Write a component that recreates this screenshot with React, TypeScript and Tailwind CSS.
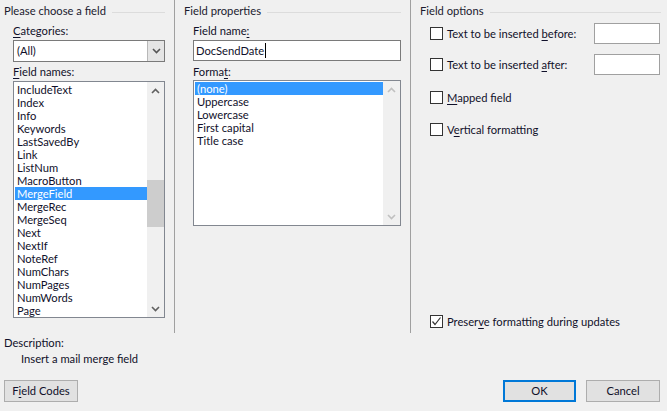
import React from "react";

const font = { fontFamily: 'Lato, "Segoe UI", sans-serif' };

function U({ children }: { children: React.ReactNode }) {
  return <span className="underline underline-offset-2">{children}</span>;
}

function Heading({ children }: { children: React.ReactNode }) {
  return (
    <div className="flex items-center h-[14px] mt-[4px] gap-[6px]">
      <span className="whitespace-nowrap text-[#1b1b2f]">{children}</span>
      <div className="flex-1 h-px bg-[#dcdcdc] mt-[2px]" />
    </div>
  );
}

function Chevron({ up, color }: { up?: boolean; color: string }) {
  return (
    <svg width="9" height="6" viewBox="0 0 9 6">
      <path
        d={up ? "M1 5 L4.5 1.5 L8 5" : "M1 1 L4.5 4.5 L8 1"}
        stroke={color}
        strokeWidth="1.6"
        fill="none"
      />
    </svg>
  );
}

function Check({ checked, label }: { checked?: boolean; label: React.ReactNode }) {
  return (
    <div className="flex items-center gap-[4px]">
      <div className="w-[13px] h-[13px] border border-[#333] bg-white flex items-center justify-center">
        {checked && (
          <svg width="11" height="11" viewBox="0 0 11 11">
            <path d="M1.5 5.5 L4 8.5 L9.5 1.5" stroke="#333" strokeWidth="1.2" fill="none" />
          </svg>
        )}
      </div>
      <span className="whitespace-nowrap">{label}</span>
    </div>
  );
}

const fieldNames = [
  "IncludeText",
  "Index",
  "Info",
  "Keywords",
  "LastSavedBy",
  "Link",
  "ListNum",
  "MacroButton",
  "MergeField",
  "MergeRec",
  "MergeSeq",
  "Next",
  "NextIf",
  "NoteRef",
  "NumChars",
  "NumPages",
  "NumWords",
  "Page",
];

const formats = ["(none)", "Uppercase", "Lowercase", "First capital", "Title case"];

export default function App() {
  return (
    <div
      className="w-[667px] h-[411px] bg-[#f0f0f0] text-[11.2px] leading-[14px] text-[#10102a] overflow-hidden flex flex-col"
      style={font}
    >
      <div className="flex h-[333px]">
        {/* Column 1 */}
        <div className="w-[175px] border-r border-[#a0a0a0] pl-[4px] pr-[9px] flex flex-col">
          <Heading>Please choose a field</Heading>
          <div className="pl-[9px] flex flex-col">
            <div className="mt-[6px] h-[14px]">
              <U>C</U>ategories:
            </div>
            <div className="mt-[2px] h-[22px] border border-[#7a7a7a] bg-white flex">
              <div className="flex-1 pl-[3px] flex items-center">(All)</div>
              <div className="w-[17px] bg-[#e5e5e5] border-l border-[#b8b8b8] flex items-center justify-center">
                <Chevron color="#555" />
              </div>
            </div>
            <div className="mt-[3px] h-[14px]">
              <U>F</U>ield names:
            </div>
            <div className="mt-[2px] h-[237px] border border-[#828790] bg-white flex">
              <div className="flex-1 pt-[1px] pl-[1px] overflow-hidden">
                {fieldNames.map((n) => (
                  <div
                    key={n}
                    className={
                      "h-[13px] leading-[13px] pl-[2px] whitespace-nowrap overflow-hidden " +
                      (n === "MergeField" ? "bg-[#3399ff] text-white" : "")
                    }
                  >
                    {n}
                  </div>
                ))}
              </div>
              <div className="w-[17px] bg-[#f0f0f0] flex flex-col items-center">
                <div className="h-[17px] flex items-center justify-center">
                  <Chevron up color="#606060" />
                </div>
                <div className="w-full mt-[81px] h-[47px] bg-[#cdcdcd]" />
                <div className="flex-1" />
                <div className="h-[17px] flex items-center justify-center">
                  <Chevron color="#606060" />
                </div>
              </div>
            </div>
          </div>
        </div>

        {/* Column 2 */}
        <div className="w-[236px] border-r border-[#a0a0a0] pl-[9px] pr-[9px] flex flex-col">
          <Heading>Field properties</Heading>
          <div className="pl-[9px] flex flex-col">
            <div className="mt-[6px] h-[14px]">
              Field name<U>:</U>
            </div>
            <div className="mt-[2px] h-[21px] border border-[#7a7a7a] bg-white flex items-center pl-[2px]">
              DocSendDate
              <span className="inline-block w-px h-[15px] bg-black ml-px" />
            </div>
            <div className="mt-[4px] h-[14px]">
              Forma<U>t</U>:
            </div>
            <div className="mt-[1px] h-[146px] border border-[#828790] bg-white flex">
              <div className="flex-1 pt-[1px] pl-[1px]">
                {formats.map((f, i) => (
                  <div
                    key={f}
                    className={
                      "h-[13px] leading-[13px] pl-[2px] whitespace-nowrap overflow-hidden " +
                      (i === 0 ? "bg-[#3399ff] text-white" : "")
                    }
                  >
                    {f}
                  </div>
                ))}
              </div>
              <div className="w-[17px] bg-[#f0f0f0] flex flex-col items-center">
                <div className="h-[17px] flex items-center justify-center">
                  <Chevron up color="#c0c0c0" />
                </div>
                <div className="flex-1" />
                <div className="h-[17px] flex items-center justify-center">
                  <Chevron color="#c0c0c0" />
                </div>
              </div>
            </div>
          </div>
        </div>

        {/* Column 3 */}
        <div className="flex-1 pl-[9px] pr-[6px] flex flex-col">
          <Heading>Field options</Heading>
          <div className="pl-[10px] pr-[1px] flex flex-col">
            <div className="mt-[5px] h-[21px] flex items-center justify-between">
              <Check label={<>Text to be inserted <U>b</U>efore:</>} />
              <div className="w-[66px] h-[21px] bg-white border border-[#a0a0a0]" />
            </div>
            <div className="mt-[10px] h-[21px] flex items-center justify-between">
              <Check label={<>Text to be inserted <U>a</U>fter:</>} />
              <div className="w-[66px] h-[21px] bg-white border border-[#a0a0a0]" />
            </div>
            <div className="mt-[12px] h-[21px] flex items-center">
              <Check label={<><U>M</U>apped field</>} />
            </div>
            <div className="mt-[11px] h-[21px] flex items-center">
              <Check label={<>V<U>e</U>rtical formatting</>} />
            </div>
            <div className="mt-[171px] h-[21px] flex items-center">
              <Check checked label={<>Preser<U>v</U>e formatting during updates</>} />
            </div>
          </div>
        </div>
      </div>

      {/* Bottom */}
      <div className="flex-1 flex flex-col pl-[4px] pr-[7px]">
        <div className="mt-[3px] h-[14px]">Description:</div>
        <div className="mt-[2px] h-[14px] pl-[17px]">Insert a mail merge field</div>
        <div className="mt-[14px] flex items-center justify-between">
          <button className="w-[74px] h-[22px] bg-[#e1e1e1] border border-[#adadad] text-[#10102a]">
            F<U>i</U>eld Codes
          </button>
          <div className="flex gap-[10px]">
            <button className="w-[73px] h-[22px] bg-[#e1e1e1] border-2 border-[#0078d7] text-[#10102a]">
              OK
            </button>
            <button className="w-[74px] h-[22px] bg-[#e1e1e1] border border-[#adadad] text-[#10102a]">
              Cancel
            </button>
          </div>
        </div>
      </div>
    </div>
  );
}
